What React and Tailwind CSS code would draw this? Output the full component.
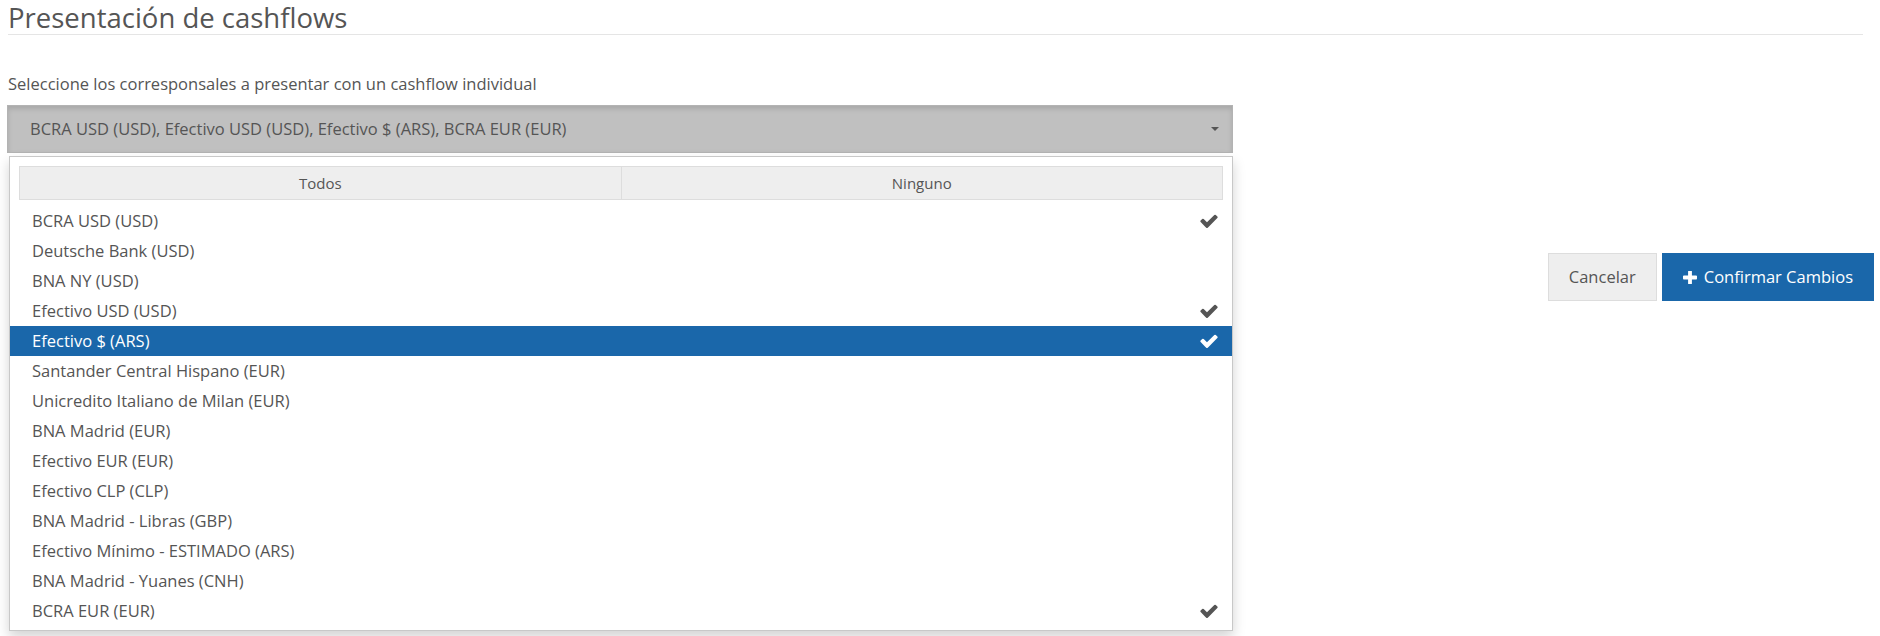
import React from 'react';

const items = [
  { name: 'BCRA USD (USD)', checked: true },
  { name: 'Deutsche Bank (USD)' },
  { name: 'BNA NY (USD)' },
  { name: 'Efectivo USD (USD)', checked: true },
  { name: 'Efectivo $ (ARS)', checked: true, active: true },
  { name: 'Santander Central Hispano (EUR)' },
  { name: 'Unicredito Italiano de Milan (EUR)' },
  { name: 'BNA Madrid (EUR)' },
  { name: 'Efectivo EUR (EUR)' },
  { name: 'Efectivo CLP (CLP)' },
  { name: 'BNA Madrid - Libras (GBP)' },
  { name: 'Efectivo Mínimo - ESTIMADO (ARS)' },
  { name: 'BNA Madrid - Yuanes (CNH)' },
  { name: 'BCRA EUR (EUR)', checked: true },
];

// font-awesome style check mark
const CheckIcon = ({ className }) => (
  <svg className={className} viewBox="0 0 1792 1792" fill="currentColor">
    <path d="M1671 566q0 40-28 68l-724 724-136 136q-28 28-68 28t-68-28l-136-136-362-362q-28-28-28-68t28-68l136-136q28-28 68-28t68 28l294 295 656-657q28-28 68-28t68 28l136 136q28 28 28 68z" />
  </svg>
);

const PlusIcon = () => (
  <svg className="w-[14px] h-[13px]" viewBox="0 320 1408 1152" fill="currentColor">
    <path d="M1408 800v192q0 40-28 68t-68 28h-416v416q0 40-28 68t-68 28h-192q-40 0-68-28t-28-68v-416h-416q-40 0-68-28t-28-68v-192q0-40 28-68t68-28h416v-416q0-40 28-68t68-28h192q40 0 68 28t28 68v416h416q40 0 68 28t28 68z" />
  </svg>
);

const HandCursor = () => (
  <svg className="absolute left-[352px] top-[281px] w-[17px] h-[18px]" viewBox="0 0 17 18">
    <path
      d="M5 1.5c0-.8 1.5-.8 1.5 0V8h.5V6c0-.8 1.5-.8 1.5 0v2h.5V6.5c0-.8 1.5-.8 1.5 0V8.5h.5V7.5c0-.8 1.5-.8 1.5 0v5c0 2-1 3.5-1.5 4H6c-.5-.5-3.5-4-4-5-.4-.8.6-1.6 1.3-.9L5 12.3z"
      fill="#fff"
      stroke="#000"
      strokeWidth="1"
      strokeLinejoin="round"
    />
    <path d="M7 13.5v2M9 13.5v2M11 13.5v2" stroke="#000" strokeWidth="0.8" />
  </svg>
);

const App = () => {
  return (
    <div className="relative w-[1880px] h-[636px] overflow-hidden bg-white text-[#555] font-['Open_Sans','Noto_Sans',sans-serif]">
      {/* Header */}
      <div className="pl-[8px] pr-[17px]">
        <h1 className="pt-[3px] pb-[1px] text-[27.5px] leading-[30px] font-normal border-b border-[#e5e5e5]">
          Presentación de cashflows
        </h1>
      </div>

      {/* Selector */}
      <div className="pl-[7px]">
        <p className="mt-[39px] pl-px text-[16.5px] leading-[20px]">
          Seleccione los corresponsales a presentar con un cashflow individual
        </p>
        <div className="relative w-[1226px] mt-[11px]">
          <div className="flex items-center justify-between h-[48px] pl-[22px] pr-[13px] bg-[#c0c0c0] border border-[#b3b3b3] shadow-[inset_0_3px_5px_rgba(0,0,0,0.125)] text-[16.5px]">
            <span>BCRA USD (USD), Efectivo USD (USD), Efectivo $ (ARS), BCRA EUR (EUR)</span>
            <span className="w-0 h-0 border-x-[4px] border-x-transparent border-t-[4px] border-t-[#555]" />
          </div>

          {/* Dropdown menu */}
          <div className="absolute left-[2px] top-[51px] w-[1224px] bg-white border border-[#c8c8c8] shadow-[0_6px_12px_rgba(0,0,0,0.175)] pt-[9px] pb-[4px] z-10">
            <div className="flex mx-[9px] h-[34px] bg-[#eeeeee] border border-[#dddddd] text-[15px]">
              <div className="flex-1 flex items-center justify-center border-r border-[#dddddd]">Todos</div>
              <div className="flex-1 flex items-center justify-center">Ninguno</div>
            </div>
            <ul className="mt-[6px]">
              {items.map((item) => (
                <li
                  key={item.name}
                  className={`flex items-center justify-between h-[30px] pl-[22px] pr-[13px] text-[16.5px] ${
                    item.active ? 'bg-[#1a67aa] text-white' : ''
                  }`}
                >
                  <span>{item.name}</span>
                  {item.checked && (
                    <CheckIcon className={`w-[20px] h-[20px] ${item.active ? 'text-white' : 'text-[#555]'}`} />
                  )}
                </li>
              ))}
            </ul>
          </div>
        </div>
      </div>

      {/* Actions */}
      <div className="flex justify-end gap-[5px] pr-[6px] mt-[100px]">
        <button className="h-[48px] px-[20px] bg-[#eeeeee] border border-[#dddddd] text-[16.5px] text-[#555]">
          Cancelar
        </button>
        <button className="flex items-center gap-[7px] h-[48px] px-[21px] bg-[#1a67aa] text-white text-[16.5px]">
          <PlusIcon />
          <span>Confirmar Cambios</span>
        </button>
      </div>

      <HandCursor />
    </div>
  );
};

export default App;
